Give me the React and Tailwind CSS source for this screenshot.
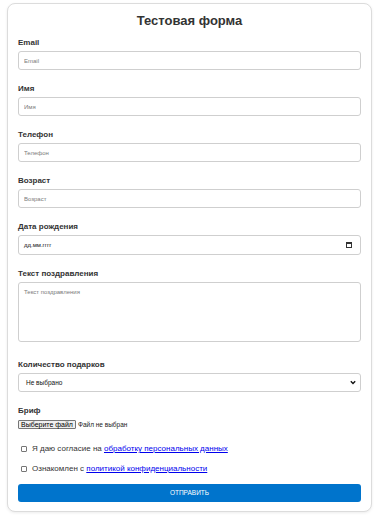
import React from "react";

function Label({ children }) {
  return (
    <div className="text-[8px] leading-[10px] font-bold text-[#333] mb-[3px]">{children}</div>
  );
}

function TextField({ label, placeholder }) {
  return (
    <div className="mb-[14px]">
      <Label>{label}</Label>
      <input
        type="text"
        placeholder={placeholder}
        className="block w-full h-[19px] border border-[#cfcfcf] rounded-[3px] px-[5px] text-[6px] text-[#333] placeholder:text-[#7a7a7a] outline-none bg-white"
      />
    </div>
  );
}

export default function App() {
  return (
    <div className="pt-[3px] pl-[7px] pr-[6px] pb-[8px] bg-white font-['Liberation_Sans',Arial,sans-serif]">
      <div className="border border-[#dcdcdc] rounded-[8px] px-[10px] pt-[8px] pb-[9px] shadow-[0_1px_3px_rgba(0,0,0,0.08)] bg-white">
        <h1 className="text-center text-[13px] leading-[18px] font-bold text-[#333] mb-[8px]">
          Тестовая форма
        </h1>

        <TextField label="Email" placeholder="Email" />
        <TextField label="Имя" placeholder="Имя" />
        <TextField label="Телефон" placeholder="Телефон" />
        <TextField label="Возраст" placeholder="Возраст" />

        <div className="mb-[14px]">
          <Label>Дата рождения</Label>
          <div className="flex items-center justify-between w-full h-[20px] border border-[#cfcfcf] rounded-[3px] pl-[5px] pr-[8px] bg-white">
            <span className="text-[6px] text-[#111]">дд.мм.гггг</span>
            <svg width="6" height="6" viewBox="0 0 6 6">
              <rect x="0.5" y="0.5" width="5" height="5" fill="none" stroke="#333" strokeWidth="1" />
              <rect x="0.5" y="0.5" width="5" height="1.5" fill="#333" />
            </svg>
          </div>
        </div>

        <div className="mb-[18px]">
          <Label>Текст поздравления</Label>
          <textarea
            placeholder="Текст поздравления"
            className="block w-full h-[60px] resize-none border border-[#cfcfcf] rounded-[3px] px-[5px] pt-[5px] text-[6px] leading-[8px] text-[#333] placeholder:text-[#7a7a7a] outline-none bg-white"
          />
        </div>

        <div className="mb-[14px]">
          <Label>Количество подарков</Label>
          <div className="flex items-center justify-between w-full h-[19px] border border-[#cfcfcf] rounded-[3px] pl-[7px] pr-[4px] bg-white">
            <span className="text-[6.5px] text-[#111]">Не выбрано</span>
            <svg width="6" height="5" viewBox="0 0 6 5">
              <path d="M0.8 1.2 L3 3.4 L5.2 1.2" fill="none" stroke="#111" strokeWidth="1.4" />
            </svg>
          </div>
        </div>

        <div className="mb-[15px]">
          <div className="text-[8px] leading-[10px] font-bold text-[#333] mb-[4px]">Бриф</div>
          <div className="flex items-center h-[9px]">
            <span className="flex items-center h-[9px] px-[2px] border border-[#767676] rounded-[1px] bg-[#efefef] text-[7px] leading-none text-black">
              Выберите файл
            </span>
            <span className="ml-[2px] text-[6.5px] text-[#222]">Файл не выбран</span>
          </div>
        </div>

        <div className="flex items-center h-[10px] pl-[3px] mb-[10px] text-[8px] text-[#333]">
          <span className="w-[6px] h-[6px] border border-[#767676] rounded-[1px] bg-white mr-[5px]" />
          <span>
            Я даю согласие на{" "}
            <a href="#" className="text-[#0000ee] underline">обработку персональных данных</a>
          </span>
        </div>

        <div className="flex items-center h-[10px] pl-[3px] mb-[10px] text-[8px] text-[#333]">
          <span className="w-[6px] h-[6px] border border-[#767676] rounded-[1px] bg-white mr-[5px]" />
          <span>
            Ознакомлен с{" "}
            <a href="#" className="text-[#0000ee] underline">политикой конфиденциальности</a>
          </span>
        </div>

        <button className="block w-full h-[18px] rounded-[3px] bg-[#0074cc] text-white text-[6.5px] uppercase">
          Отправить
        </button>
      </div>
    </div>
  );
}
